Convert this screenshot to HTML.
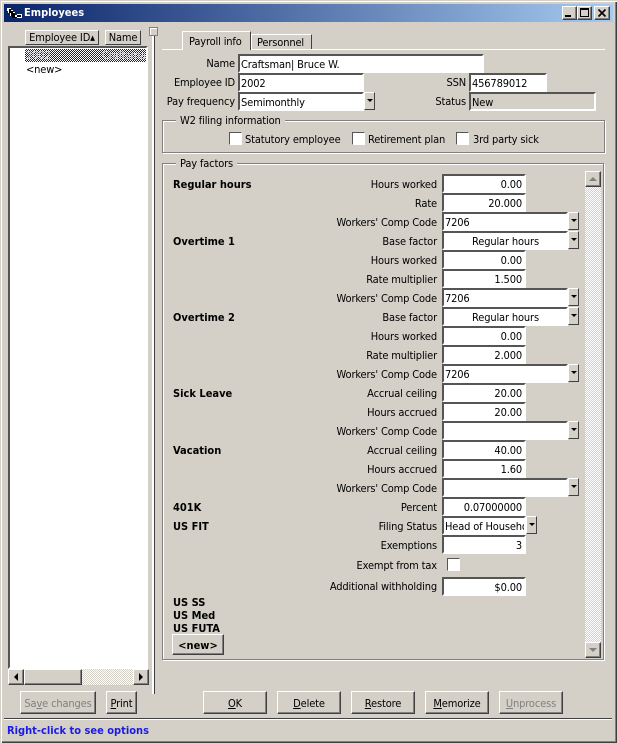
<!DOCTYPE html>
<html><head><meta charset="utf-8"><title>Employees</title>
<style>
html,body{margin:0;padding:0;background:#d4d0c8}
#w{position:relative;width:617px;height:743px;overflow:hidden;background:#d4d0c8;font:11px/16px "DejaVu Sans Condensed","DejaVu Sans","Liberation Sans",sans-serif;font-stretch:condensed;letter-spacing:-.15px;color:#000;
box-shadow:inset 1px 1px #d4d0c8,inset 2px 2px #fff,inset -1px -1px #404040,inset -2px -2px #808080}
#w div,#w svg{position:absolute}
.t{white-space:nowrap;height:16px}
.l{text-align:right;right:180px;white-space:nowrap;height:16px}
.b{font-weight:bold;left:173px;white-space:nowrap;letter-spacing:0}
.i{background:#fff;box-sizing:border-box;height:19px;border:2px solid;border-color:#555 #fff #fff #555;padding:1px 0 0 1px;white-space:nowrap;overflow:hidden;line-height:16px}
.n{left:442px;width:84px;text-align:right;padding-right:2px}
.c{left:442px;width:126px}
.d{box-sizing:border-box;width:11px;height:18px;background:#d4d0c8;border:1px solid;border-color:#fff #404040 #404040 #fff}
.d:after{content:"";position:absolute;left:2px;top:6px;border:3px solid transparent;border-top:3px solid #000;border-bottom:0}
.btn{box-sizing:border-box;height:23px;top:691px;text-align:center;line-height:23px;white-space:nowrap;border:1px solid;border-color:#fff #404040 #404040 #fff;box-shadow:inset -1px -1px #808080}
.g{color:#808080}
u{text-decoration:underline}
.grp{box-sizing:border-box;border:1px solid #808080;box-shadow:1px 1px #fff,inset 1px 1px #fff}
.gt{background:#d4d0c8;padding:0 4px;white-space:nowrap;height:14px;line-height:15px}
.cb{box-sizing:border-box;width:13px;height:13px;background:#fff;border:1px solid;border-color:#555 #fff #fff #555}
.hd{box-sizing:border-box;height:15px;top:30px;text-align:center;line-height:13px;white-space:nowrap;border:1px solid;border-color:#fff #404040 #404040 #fff}
.sb{box-sizing:border-box;background:#d4d0c8;border:1px solid;border-color:#fff #404040 #404040 #fff;box-shadow:inset -1px -1px #808080}
</style></head><body><div id="w">

<!-- title bar -->
<div style="left:4px;top:4px;width:609px;height:18px;background:linear-gradient(90deg,#0a246a,#a6caf0)"></div>
<svg style="left:6px;top:6px" width="17" height="15" viewBox="0 0 17 15"><path d="M1 2h4v2h2v2h2v3h2v-1h5v4H6v-2H4V7H2V5H1z" fill="#fff"/><path d="M3 3h2v2h2v2h2v4h2V9h4v2h-4v1H6v-2H5V7H3z" fill="#000"/></svg>
<div class="t" style="left:24px;top:5px;color:#fff;font-weight:bold;letter-spacing:0">Employees</div>
<div class="sb" style="left:562px;top:6px;width:15px;height:14px"></div>
<div style="left:565px;top:15px;width:6px;height:2px;background:#000"></div>
<div class="sb" style="left:577px;top:6px;width:15px;height:14px"></div>
<div style="left:580px;top:8px;box-sizing:border-box;width:9px;height:9px;border:1px solid #000;border-top-width:2px"></div>
<div class="sb" style="left:594px;top:6px;width:16px;height:14px"></div>
<svg style="left:594px;top:6px" width="16" height="14"><path d="M4.5 3.5l7 7M11.5 3.5l-7 7" stroke="#000" stroke-width="1.6"/></svg>

<!-- left pane -->
<div class="hd" style="left:25px;width:74px">Employee ID<span style="font-size:7px;vertical-align:1px">▲</span></div>
<div class="hd" style="left:105px;width:36px">Name</div>
<div style="left:8px;top:46px;width:140px;height:623px;box-sizing:border-box;background:#fff;border:2px solid;border-color:#555 #fff #fff #555"></div>
<div style="left:25px;top:49px;width:121px;height:13px;background:repeating-conic-gradient(#0a246a 0 25%,#fff 0 50%) 0 0/2px 2px"></div>
<div class="t" style="left:26px;top:48px;color:#d8d8e8">2002</div>
<div class="t" style="left:102px;top:48px;width:44px;overflow:hidden;color:#d8d8e8">Craftsman</div>
<div class="t" style="left:26px;top:62px">&lt;new&gt;</div>
<div style="left:8px;top:669px;width:141px;height:16px;background:repeating-conic-gradient(#d4d0c8 0 25%,#fff 0 50%) 0 0/2px 2px"></div>
<div class="sb" style="left:8px;top:669px;width:16px;height:16px"></div>
<svg style="left:8px;top:669px" width="16" height="16"><path d="M10 4v8L6 8z" fill="#000"/></svg>
<div class="sb" style="left:24px;top:669px;width:58px;height:16px"></div>
<div class="sb" style="left:133px;top:669px;width:16px;height:16px"></div>
<svg style="left:133px;top:669px" width="16" height="16"><path d="M6 4v8l4-4z" fill="#000"/></svg>
<div class="btn g" style="left:20px;width:76px">Sa<u>v</u>e changes</div>
<div class="btn" style="left:106px;width:31px"><u>P</u>rint</div>

<!-- splitter -->
<div style="left:152px;top:30px;width:2px;height:664px;background:#fff"></div>
<div style="left:154px;top:30px;width:1px;height:664px;background:#404040"></div>
<div style="left:149px;top:27px;width:9px;height:9px;box-sizing:border-box;background:#d4d0c8;border:1px solid #808080;box-shadow:inset 1px 1px #fff"></div>

<!-- tabs -->
<div style="left:162px;top:49px;width:443px;height:1px;background:#fff"></div>
<div style="left:182px;top:31px;width:69px;height:19px;box-sizing:border-box;background:#d4d0c8;border:1px solid;border-color:#fff #404040 transparent #fff;border-bottom:0"></div>
<div class="t" style="left:189px;top:34px">Payroll info</div>
<div style="left:251px;top:34px;width:61px;height:15px;box-sizing:border-box;border:1px solid;border-color:#fff #404040 transparent #fff;border-bottom:0"></div>
<div class="t" style="left:257px;top:35px">Personnel</div>

<!-- header fields -->
<div class="l" style="right:382px;top:56px">Name</div>
<div class="i" style="left:238px;top:54px;width:246px">Craftsman| Bruce W.</div>
<div class="l" style="right:382px;top:75px">Employee ID</div>
<div class="i" style="left:238px;top:73px;width:126px">2002</div>
<div class="l" style="right:382px;top:94px">Pay frequency</div>
<div class="i" style="left:238px;top:92px;width:126px">Semimonthly</div>
<div class="d" style="left:364px;top:92px"></div>
<div class="l" style="right:151px;top:75px">SSN</div>
<div class="i" style="left:469px;top:73px;width:78px">456789012</div>
<div class="l" style="right:151px;top:94px">Status</div>
<div class="i" style="left:469px;top:92px;width:127px;background:#d4d0c8">New</div>

<!-- W2 -->
<div class="grp" style="left:162px;top:120px;width:443px;height:33px"></div>
<div class="gt" style="left:176px;top:113px">W2 filing information</div>
<div class="cb" style="left:229px;top:132px"></div>
<div class="t" style="left:245px;top:132px">Statutory employee</div>
<div class="cb" style="left:352px;top:132px"></div>
<div class="t" style="left:368px;top:132px">Retirement plan</div>
<div class="cb" style="left:456px;top:132px"></div>
<div class="t" style="left:473px;top:132px">3rd party sick</div>

<!-- Pay factors -->
<div class="grp" style="left:162px;top:163px;width:442px;height:497px"></div>
<div class="gt" style="left:176px;top:156px">Pay factors</div>
<div style="left:585px;top:171px;width:16px;height:487px;background:repeating-conic-gradient(#d4d0c8 0 25%,#fff 0 50%) 0 0/2px 2px"></div>
<div class="sb" style="left:585px;top:171px;width:16px;height:16px"></div>
<svg style="left:585px;top:171px" width="16" height="16"><path d="M4 10h8L8 6z" fill="#808080"/></svg>
<div class="sb" style="left:585px;top:642px;width:16px;height:16px"></div>
<svg style="left:585px;top:642px" width="16" height="16"><path d="M4 6h8l-4 4z" fill="#808080"/></svg>

<div class="b" style="top:177px">Regular hours</div>
<div class="b" style="top:234px">Overtime 1</div>
<div class="b" style="top:310px">Overtime 2</div>
<div class="b" style="top:386px">Sick Leave</div>
<div class="b" style="top:443px">Vacation</div>
<div class="b" style="top:500px">401K</div>
<div class="b" style="top:519px">US FIT</div>
<div class="b" style="top:595px">US SS</div>
<div class="b" style="top:608px">US Med</div>
<div class="b" style="top:621px">US FUTA</div>
<div class="btn" style="left:172px;top:634px;width:52px;height:21px;line-height:21px;font-weight:bold;letter-spacing:0">&lt;new&gt;</div>

<div class="l" style="top:177px">Hours worked</div><div class="i n" style="top:174px">0.00</div>
<div class="l" style="top:196px">Rate</div><div class="i n" style="top:193px">20.000</div>
<div class="l" style="top:215px">Workers' Comp Code</div><div class="i c" style="top:212px">7206</div><div class="d" style="left:568px;top:212px"></div>
<div class="l" style="top:234px">Base factor</div><div class="i c" style="top:231px;text-align:center">Regular hours</div><div class="d" style="left:568px;top:231px"></div>
<div class="l" style="top:253px">Hours worked</div><div class="i n" style="top:250px">0.00</div>
<div class="l" style="top:272px">Rate multiplier</div><div class="i n" style="top:269px">1.500</div>
<div class="l" style="top:291px">Workers' Comp Code</div><div class="i c" style="top:288px">7206</div><div class="d" style="left:568px;top:288px"></div>
<div class="l" style="top:310px">Base factor</div><div class="i c" style="top:307px;text-align:center">Regular hours</div><div class="d" style="left:568px;top:307px"></div>
<div class="l" style="top:329px">Hours worked</div><div class="i n" style="top:326px">0.00</div>
<div class="l" style="top:348px">Rate multiplier</div><div class="i n" style="top:345px">2.000</div>
<div class="l" style="top:367px">Workers' Comp Code</div><div class="i c" style="top:364px">7206</div><div class="d" style="left:568px;top:364px"></div>
<div class="l" style="top:386px">Accrual ceiling</div><div class="i n" style="top:383px">20.00</div>
<div class="l" style="top:405px">Hours accrued</div><div class="i n" style="top:402px">20.00</div>
<div class="l" style="top:424px">Workers' Comp Code</div><div class="i c" style="top:421px"></div><div class="d" style="left:568px;top:421px"></div>
<div class="l" style="top:443px">Accrual ceiling</div><div class="i n" style="top:440px">40.00</div>
<div class="l" style="top:462px">Hours accrued</div><div class="i n" style="top:459px">1.60</div>
<div class="l" style="top:481px">Workers' Comp Code</div><div class="i c" style="top:478px"></div><div class="d" style="left:568px;top:478px"></div>
<div class="l" style="top:500px">Percent</div><div class="i n" style="top:497px">0.07000000</div>
<div class="l" style="top:519px">Filing Status</div><div class="i" style="left:442px;top:516px;width:84px">Head of Househo</div><div class="d" style="left:526px;top:516px"></div>
<div class="l" style="top:538px">Exemptions</div><div class="i n" style="top:535px">3</div>
<div class="l" style="top:558px">Exempt from tax</div><div class="cb" style="left:447px;top:558px"></div>
<div class="l" style="top:579px">Additional withholding</div><div class="i n" style="top:577px">$0.00</div>

<!-- bottom buttons -->
<div class="btn" style="left:203px;width:64px"><u>O</u>K</div>
<div class="btn" style="left:277px;width:64px"><u>D</u>elete</div>
<div class="btn" style="left:351px;width:64px"><u>R</u>estore</div>
<div class="btn" style="left:425px;width:64px"><u>M</u>emorize</div>
<div class="btn g" style="left:499px;width:64px"><u>U</u>nprocess</div>

<!-- status -->
<div style="left:4px;top:718px;width:608px;height:1px;background:#404040"></div>
<div style="left:4px;top:719px;width:608px;height:1px;background:#fff"></div>
<div class="t" style="left:7px;top:723px;color:#1a1ae6;font-weight:bold;letter-spacing:0">Right-click to see options</div>
</div></body></html>
